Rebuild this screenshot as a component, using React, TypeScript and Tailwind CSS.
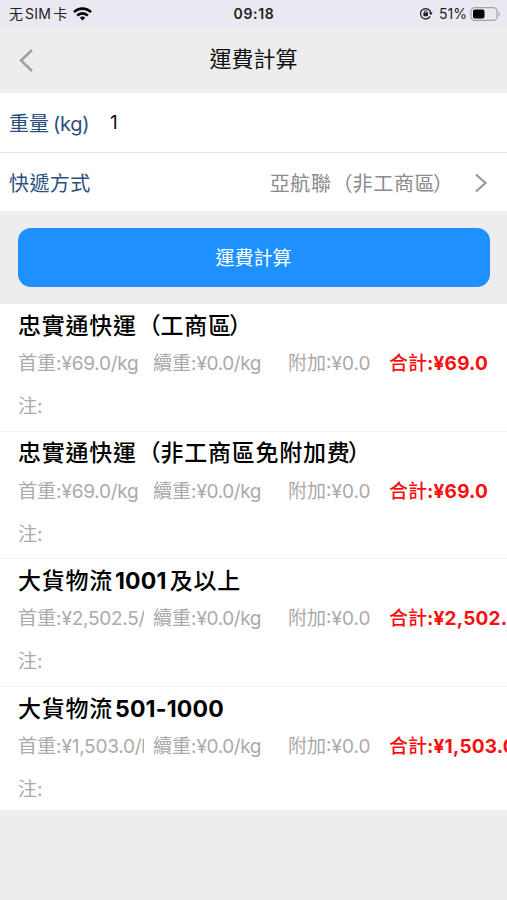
import React from 'react';

interface Quote {
    name: string;
    first: string;
    next: string;
    extra: string;
    total: string;
}

const quotes: Quote[] = [
    { name: '忠實通快運（工商區）', first: '¥69.0/kg', next: '¥0.0/kg', extra: '¥0.0', total: '¥69.0' },
    { name: '忠實通快運（非工商區免附加费）', first: '¥69.0/kg', next: '¥0.0/kg', extra: '¥0.0', total: '¥69.0' },
    { name: '大貨物流1001及以上', first: '¥2,502.5/kg', next: '¥0.0/kg', extra: '¥0.0', total: '¥2,502.5' },
    { name: '大貨物流501-1000', first: '¥1,503.0/kg', next: '¥0.0/kg', extra: '¥0.0', total: '¥1,503.0' },
];

const StatusBar: React.FC = () => (
    <div className="h-[28px] flex items-center justify-between pb-[1px] pl-[9px] pr-[6px] bg-[#eae9f1] text-[14px] text-[#222222]">
        <div className="flex flex-1 items-center gap-[6px]">
            <span className="flex gap-[2px]">
                <span>无</span><span className="tracking-[0.3px]">SIM</span><span>卡</span>
            </span>
            <svg width="19" height="14" viewBox="0 0 19 14" fill="none" stroke="black" strokeWidth="2.6">
                <path d="M1 5.2a12 12 0 0 1 17 0" />
                <path d="M4.2 8.6a7.5 7.5 0 0 1 10.6 0" />
                <path d="M9.5 13.5L6.8 10.8a3.8 3.8 0 0 1 5.4 0z" fill="black" stroke="none" />
            </svg>
        </div>
        <span className="mr-[2px] font-semibold tracking-[0.7px]">09:18</span>
        <div className="flex flex-1 items-center justify-end">
            <svg className="mr-[6px]" width="14" height="13" viewBox="0 0 14 13" fill="none" stroke="#222222" strokeWidth="1.3">
                <path d="M11.2 9.4a5.2 5.2 0 1 1 .6-3.6" />
                <path d="M9.9 5.6h3.8l-1.9 2.6z" fill="#222222" stroke="none" />
                <rect x="4.4" y="5.6" width="4.6" height="3.6" rx="0.6" fill="#222222" stroke="none" />
                <path d="M5.4 6V4.8a1.3 1.3 0 0 1 2.6 0V6" strokeWidth="0.9" />
            </svg>
            <span>51%</span>
            <svg className="ml-[3px]" width="31" height="14" viewBox="0 0 31 14">
                <rect x="1" y="0.6" width="26" height="12.8" rx="3.8" fill="none" stroke="#a3a3a8" strokeWidth="1.2" />
                <rect x="3" y="2.4" width="11.5" height="9.2" rx="2" />
                <path d="M28.6 4.8a2.6 2.6 0 0 1 0 4.6z" fill="#a3a3a8" />
            </svg>
        </div>
    </div>
);

// pulls full-width brackets in a little towards their content
const Chinese: React.FC<{ text: string }> = ({ text }) => (
    <>
        {text.split(/([（）])/).filter(Boolean).map((part) => {
            if (part === '（') return <span key={part} className="ml-[0.04em] mr-[-0.04em]">{part}</span>;
            if (part === '）') return <span key={part} className="ml-[-0.12em] mr-[0.12em]">{part}</span>;
            return part;
        })}
    </>
);

// keeps a small gap around latin runs inside a chinese title
const Title: React.FC<{ text: string }> = ({ text }) => (
    <h3 className="flex h-[42px] items-center pt-[2px] text-[23px] whitespace-nowrap text-black">
        {text.split(/([\d-]+)/).filter(Boolean).map((part) => (
            /\d/.test(part)
                ? <span key={part} className="ml-[2px] mr-[3px] font-bold tracking-[0.2px]">{part}</span>
                : <span key={part} className="font-medium tracking-[0.75px]"><Chinese text={part} /></span>
        ))}
    </h3>
);

const QuoteRow: React.FC<{ quote: Quote }> = ({ quote }) => (
    <div className="h-[127.6px] border-b border-[#f4f4f4] pl-[18px] overflow-hidden last:h-[123px] last:border-b-0">
        <Title text={quote.name} />
        <div className="flex h-[36px] items-center pt-[1px] text-[19px] text-[#aaaaaa] whitespace-nowrap">
            <span className="w-[126px] shrink-0 overflow-hidden">首重:<span className="tracking-[-0.25px]">{quote.first}</span></span>
            <span className="ml-[9px] w-[135px] shrink-0">續重:<span className="tracking-[-0.4px]">{quote.next}</span></span>
            <span className="w-[101px] shrink-0">附加:{quote.extra}</span>
            <span className="shrink-0 font-bold text-[#f80f0f]">
                <span className="font-medium">合計</span><span className="tracking-[0.2px]">:{quote.total}</span>
            </span>
        </div>
        <div className="h-[48px] pt-[1px] leading-[48px] text-[19px] text-[#aaaaaa]">注:</div>
    </div>
);

export default function App() {
    return (
        <div className="h-[900px] w-[507px] overflow-hidden bg-[#ededed] font-['Inter','Noto_Sans_CJK_TC',sans-serif]">
            <StatusBar />
            <header className="h-[65px] flex items-center px-[19px] pb-[3px] text-[22px] text-[#111111]">
                <svg className="mt-[2px]" width="16" height="24" viewBox="0 0 16 24" fill="none" stroke="#a0a0a0" strokeWidth="2.6">
                    <path d="M13 2L2 12.5L13 23" />
                </svg>
                <h1 className="flex-1 pr-[16px] text-center">運費計算</h1>
            </header>
            <section className="h-[118px] bg-white text-[20px]">
                <div className="flex h-[60px] items-center border-b border-[#e4e4e4] pl-[9px] pt-[2px]">
                    <label className="flex w-[101px] gap-[4px] text-[#2b4f7e]">
                        <span>重量</span><span className="tracking-[-0.3px]">(kg)</span>
                    </label>
                    <span className="text-[19px] text-[#111111]">1</span>
                </div>
                <div className="flex h-[58px] items-center pl-[9px] pr-[19px]">
                    <label className="pt-[3px] tracking-[0.4px] text-[#2b4f7e]">快遞方式</label>
                    <span className="ml-auto pt-[3px] tracking-[0.7px] text-[#8a8a8a]"><Chinese text="亞航聯（非工商區）" /></span>
                    <svg className="ml-[18px] mt-[1px]" width="14" height="20" viewBox="0 0 14 20" fill="none" stroke="#999999" strokeWidth="2.2">
                        <path d="M2 1.5L11.5 10L2 18.5" />
                    </svg>
                </div>
            </section>
            <div className="h-[93px] px-[17.5px] pt-[17px]">
                <button className="h-[59px] w-full rounded-[13px] bg-[#1e90ff] pt-[3px] text-[19px] text-white">運費計算</button>
            </div>
            <main className="bg-white">
                {quotes.map((quote) => <QuoteRow key={quote.name} quote={quote} />)}
            </main>
        </div>
    );
}
